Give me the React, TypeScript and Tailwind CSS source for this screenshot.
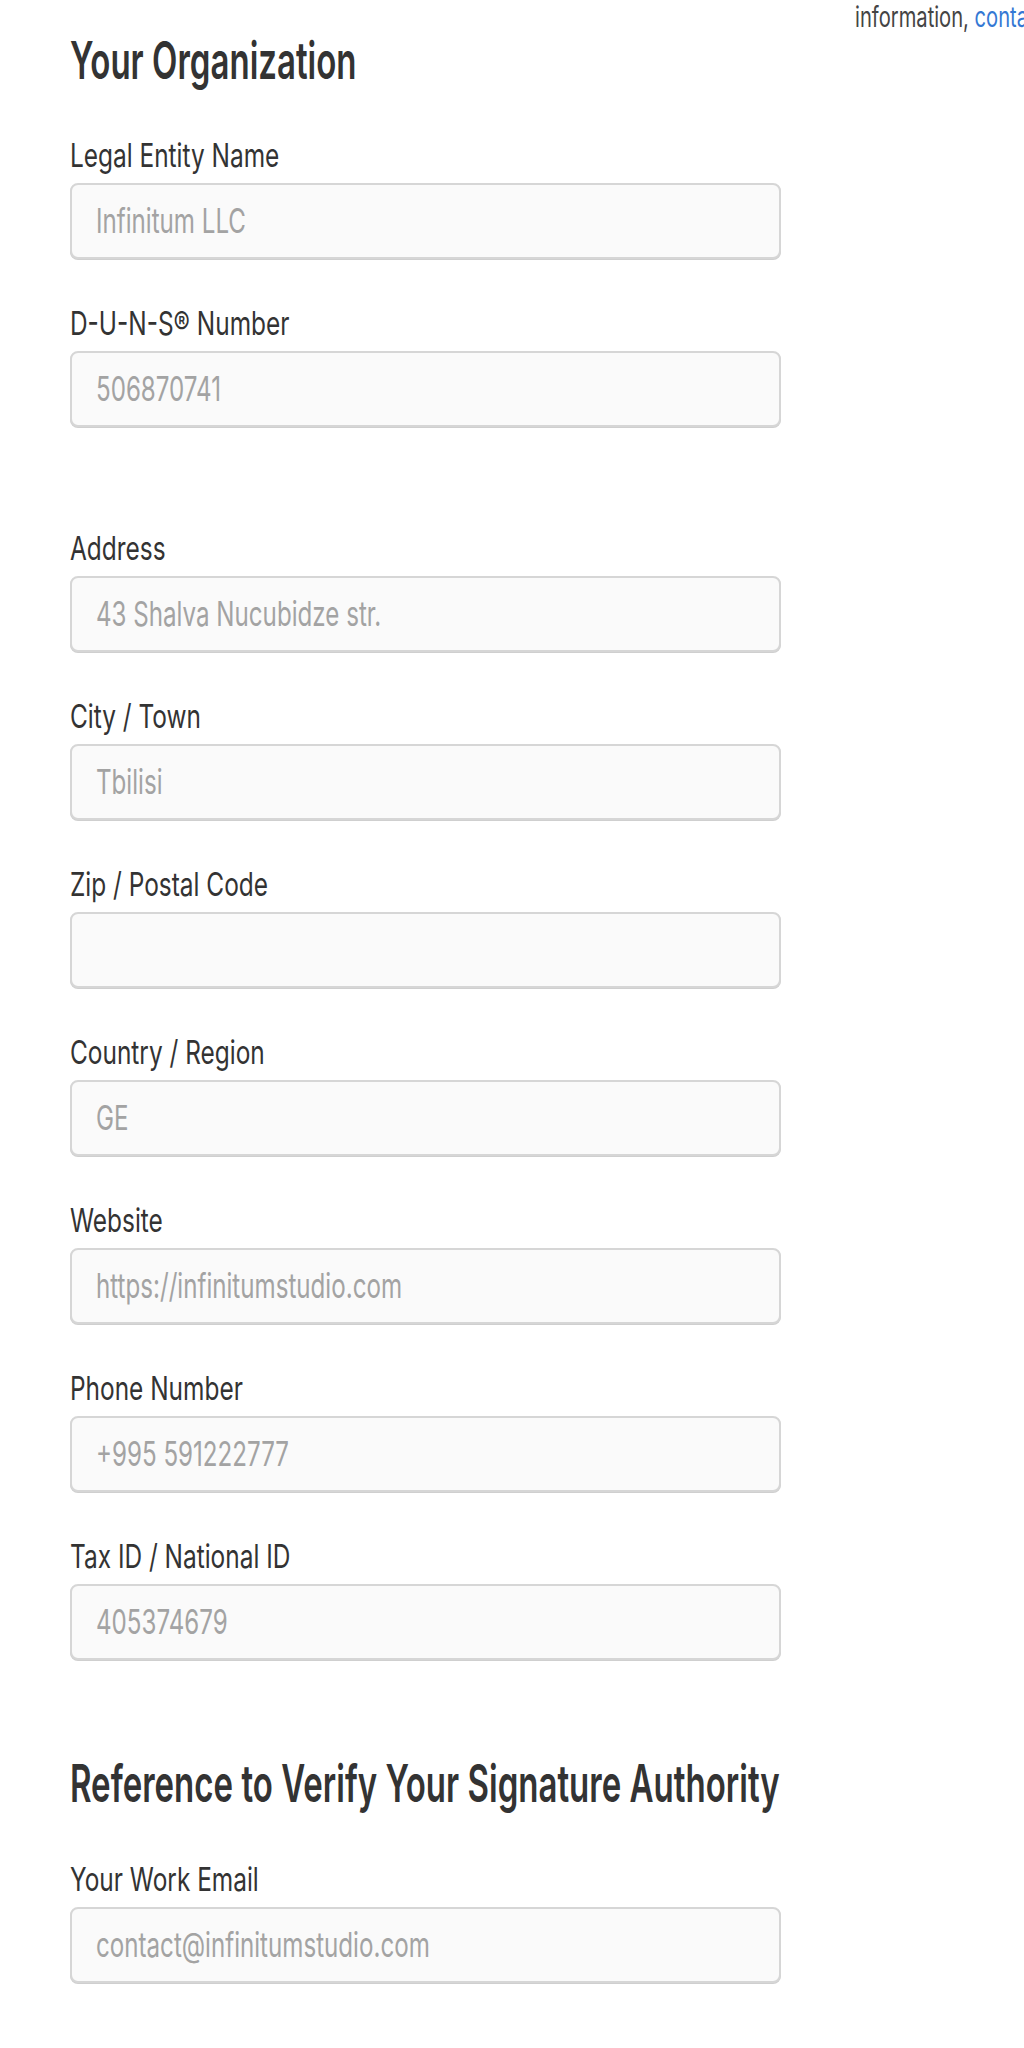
const font = { fontFamily: "Inter, 'Noto Sans', sans-serif" };

type Field = { label: string; value?: string };

const orgFields: Field[] = [
  { label: "Legal Entity Name", value: "Infinitum LLC" },
  { label: "D-U-N-S® Number", value: "506870741" },
];

const addressFields: Field[] = [
  { label: "Address", value: "43 Shalva Nucubidze str." },
  { label: "City / Town", value: "Tbilisi" },
  { label: "Zip / Postal Code" },
  { label: "Country / Region", value: "GE" },
  { label: "Website", value: "https://infinitumstudio.com" },
  { label: "Phone Number", value: "+995 591222777" },
  { label: "Tax ID / National ID", value: "405374679" },
];

function FormField({ label, value }: Field) {
  return (
    <div className="flex flex-col gap-2">
      <label className="text-[33px] leading-[40px] text-[#333]">
        <span className="inline-block origin-left scale-x-[0.74] whitespace-nowrap">{label}</span>
      </label>
      <div className="flex h-[76px] items-center rounded-[8px] border-2 border-[#d6d6d6] bg-[#fafafa] px-[24px] shadow-[0_1px_0_#cfcfcf]">
        {value && (
          <span className="inline-block origin-left scale-x-[0.71] whitespace-nowrap text-[34px] leading-[40px] text-[#a3a3a3]">
            {value}
          </span>
        )}
      </div>
    </div>
  );
}

function Heading({ children, className }: { children: string; className: string }) {
  return (
    <h2 className={`text-[52px] font-semibold leading-[60px] text-[#333] ${className}`}>
      <span className="inline-block origin-left scale-x-[0.635] whitespace-nowrap">{children}</span>
    </h2>
  );
}

export default function App() {
  return (
    <div className="flex min-h-[2048px] w-[1024px] overflow-hidden bg-white" style={font}>
      <div className="ml-[70px] flex w-[711px] shrink-0 flex-col pt-[31px]">
        <Heading className="mb-[44px]">Your Organization</Heading>

        <div className="flex flex-col gap-[44px]">
          {orgFields.map((f) => (
            <FormField key={f.label} {...f} />
          ))}
        </div>

        <div className="mt-[101px] flex flex-col gap-[44px]">
          {addressFields.map((f) => (
            <FormField key={f.label} {...f} />
          ))}
        </div>

        <Heading className="mb-[45px] mt-[94px]">Reference to Verify Your Signature Authority</Heading>

        <FormField label="Your Work Email" value="contact@infinitumstudio.com" />
      </div>

      <div className="ml-[74px] flex flex-col">
        <p className="whitespace-nowrap text-[28px] leading-[34px] text-[#444]">
          <span className="inline-block origin-left scale-x-[0.72]">
            information, <a className="text-[#3478d4]">contact</a>
          </span>
        </p>
      </div>
    </div>
  );
}
